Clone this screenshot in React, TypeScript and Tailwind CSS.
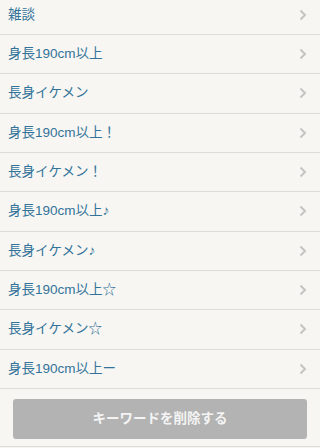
const items = [
  '雑談',
  '身長190cm以上',
  '長身イケメン',
  '身長190cm以上！',
  '長身イケメン！',
  '身長190cm以上♪',
  '長身イケメン♪',
  '身長190cm以上☆',
  '長身イケメン☆',
  '身長190cm以上ー',
]

function Chevron() {
  return (
    <svg width="8" height="12" viewBox="0 0 8 12" className="shrink-0">
      <path d="M1.5 1.5 L6 6 L1.5 10.5" fill="none" stroke="#c4c4c2" strokeWidth="2" />
    </svg>
  )
}

export default function App() {
  return (
    <div
      className="w-[320px] h-[448px] overflow-hidden bg-[#f7f6f2]"
      style={{ fontFamily: '"Liberation Sans", "Noto Sans CJK JP", sans-serif' }}
    >
      <ul className="-mt-[4.33px]">
        {items.map((item) => (
          <li
            key={item}
            className="h-[39.33px] flex items-center justify-between pl-2 pr-[13px] border-b border-[#dddcd8]"
          >
            <span className="text-[13.5px] text-[#33739a]">{item}</span>
            <Chevron />
          </li>
        ))}
      </ul>
      <div className="pt-[10px] px-[13px] pb-[7px] border-b border-[#dddcd8]">
        <button className="w-full h-[40px] rounded-[3px] bg-[#b3b3b3] text-[#f4f4f4] text-[13.5px] font-bold">
          キーワードを削除する
        </button>
      </div>
    </div>
  )
}
